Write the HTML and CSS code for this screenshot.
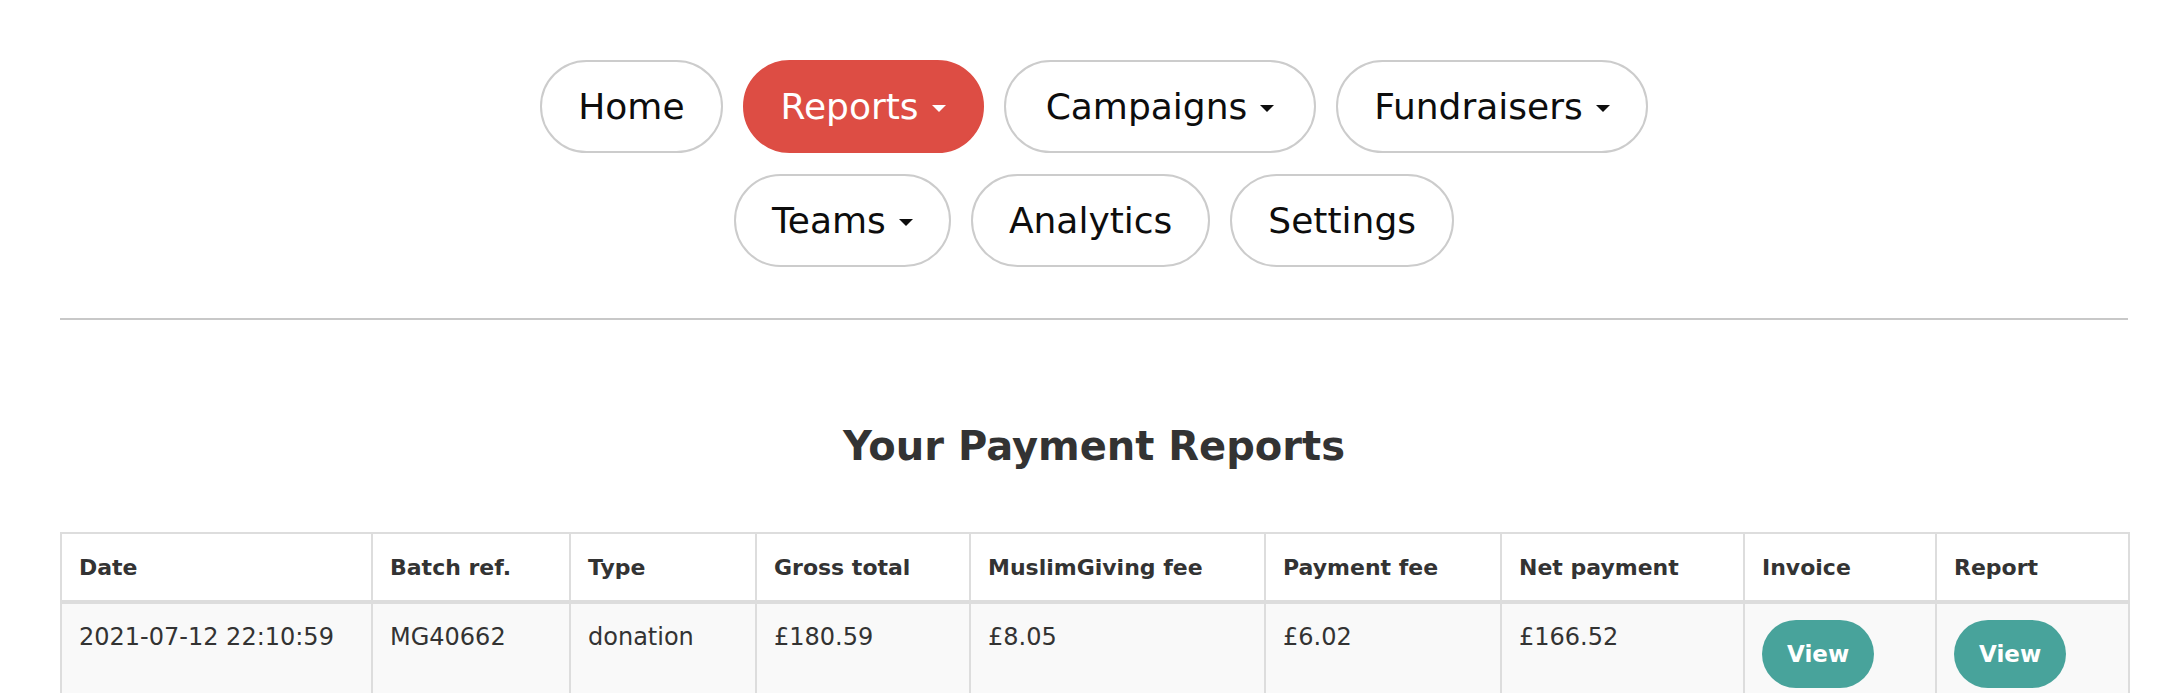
FILE: index.html
```html
<!DOCTYPE html>
<html lang="en">
<head>
<meta charset="utf-8">
<title>Your Payment Reports</title>
<link rel="stylesheet" href="styles.css">
</head>
<body>
<div class="page">
  <nav class="nav">
    <a class="pill" href="#">Home</a>
    <a class="pill pill-active" href="#">Reports<span class="caret"></span></a>
    <a class="pill pill-wide" href="#">Campaigns<span class="caret"></span></a>
    <a class="pill" href="#">Fundraisers<span class="caret"></span></a>
    <a class="pill" href="#">Teams<span class="caret"></span></a>
    <a class="pill" href="#">Analytics</a>
    <a class="pill" href="#">Settings</a>
  </nav>
  <hr class="divider">
  <h2 class="title">Your Payment Reports</h2>
  <table class="reports">
    <colgroup>
      <col class="c-date">
      <col class="c-batch">
      <col class="c-type">
      <col class="c-gross">
      <col class="c-mg">
      <col class="c-pay">
      <col class="c-net">
      <col class="c-inv">
      <col class="c-rep">
    </colgroup>
    <thead>
      <tr>
        <th>Date</th>
        <th>Batch ref.</th>
        <th>Type</th>
        <th>Gross total</th>
        <th>MuslimGiving fee</th>
        <th>Payment fee</th>
        <th>Net payment</th>
        <th>Invoice</th>
        <th>Report</th>
      </tr>
    </thead>
    <tbody>
      <tr>
        <td>2021-07-12 22:10:59</td>
        <td>MG40662</td>
        <td>donation</td>
        <td>£180.59</td>
        <td>£8.05</td>
        <td>£6.02</td>
        <td>£166.52</td>
        <td><a class="btn-view" href="#">View</a></td>
        <td><a class="btn-view" href="#">View</a></td>
      </tr>
    </tbody>
  </table>
</div>
</body>
</html>
```

FILE: styles.css
```css
html, body {
  margin: 0;
  padding: 0;
  background: #ffffff;
}

body {
  font-family: "DejaVu Sans", "Liberation Sans", sans-serif;
  color: #333333;
}

.page {
  padding: 60px 52px 0 60px;
}

.nav {
  max-width: 1240px;
  margin: 0 auto;
  display: flex;
  flex-wrap: wrap;
  justify-content: center;
  gap: 21px 20px;
}

.pill {
  display: inline-flex;
  align-items: center;
  padding: 24px 36px;
  border: 2px solid #cccccc;
  border-radius: 48px;
  font-size: 36px;
  line-height: 41px;
  color: #0d0d0d;
  text-decoration: none;
  background: #ffffff;
}

.pill-wide {
  padding-left: 40px;
  padding-right: 40px;
}

.pill-active {
  background: #dd4d44;
  border-color: #dd4d44;
  color: #ffffff;
}

.caret {
  display: inline-block;
  width: 0;
  height: 0;
  margin-left: 13px;
  margin-top: 4px;
  border-top: 7px solid currentColor;
  border-left: 7px solid transparent;
  border-right: 7px solid transparent;
}

.divider {
  margin: 51px 0 0 0;
  border: 0;
  height: 2px;
  background: #c8c8c8;
}

.title {
  margin: 102px 0 0 0;
  text-align: center;
  font-size: 40px;
  line-height: 48px;
  font-weight: bold;
  color: #333333;
}

.reports {
  margin-top: 62px;
  width: 2068px;
  table-layout: fixed;
  border-collapse: collapse;
  border: 2px solid #dddddd;
}

.c-date { width: 311px; }
.c-batch { width: 198px; }
.c-type { width: 186px; }
.c-gross { width: 214px; }
.c-mg { width: 295px; }
.c-pay { width: 236px; }
.c-net { width: 243px; }
.c-inv { width: 192px; }
.c-rep { width: 193px; }

.reports th,
.reports td {
  border: 2px solid #dddddd;
  text-align: left;
  vertical-align: top;
  white-space: nowrap;
}

.reports th {
  padding: 19px 17px 17px 17px;
  font-size: 22px;
  line-height: 30px;
  font-weight: bold;
  color: #333333;
  background: #ffffff;
  border-bottom-width: 4px;
}

.reports td {
  padding: 18px 17px 18px 17px;
  font-size: 24px;
  line-height: 30px;
  color: #333333;
  background: #f9f9f9;
}

.btn-view {
  display: inline-block;
  margin-top: -2px;
  padding: 19px 25px;
  border-radius: 34px;
  background: #48a39b;
  color: #ffffff;
  font-size: 23px;
  line-height: 30px;
  font-weight: bold;
  text-decoration: none;
}
```
